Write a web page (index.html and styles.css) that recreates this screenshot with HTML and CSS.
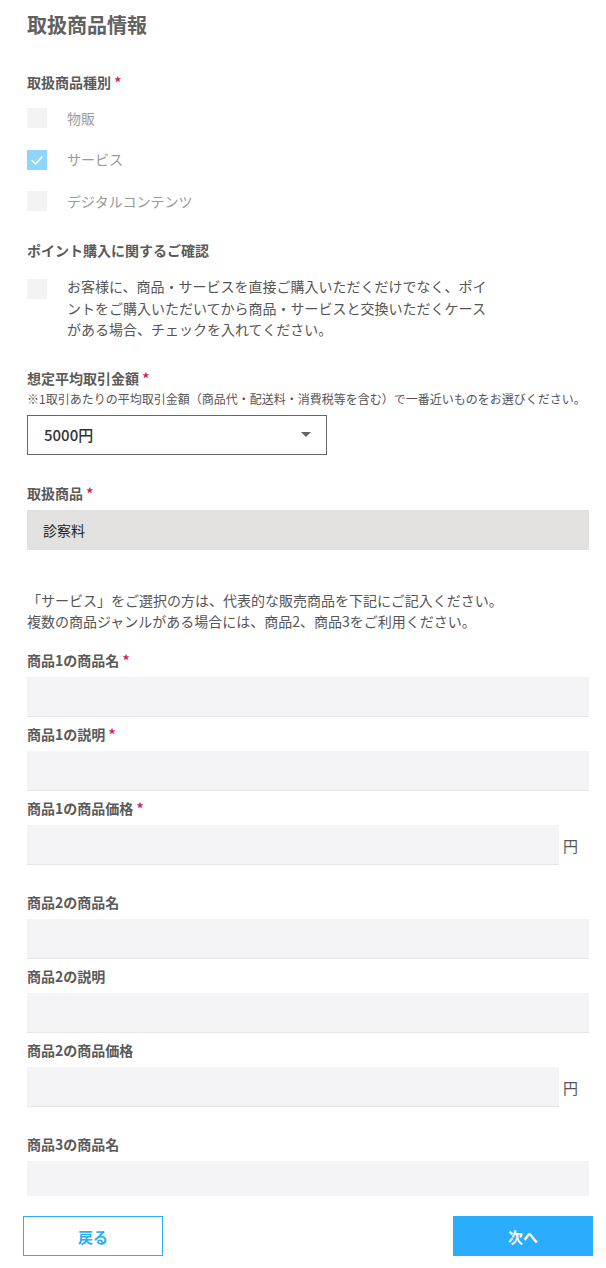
FILE: index.html
```html
<!DOCTYPE html>
<html lang="ja">
<head>
<meta charset="utf-8">
<title>取扱商品情報</title>
<link rel="stylesheet" href="styles.css">
</head>
<body>
<main class="page">
  <h1 class="title">取扱商品情報</h1>

  <div class="label first">取扱商品種別 <span class="req">*</span></div>
  <div class="options">
    <label class="option"><span class="box"></span><span class="opt-text">物販</span></label>
    <label class="option"><span class="box checked"><svg viewBox="0 0 20 20" width="20" height="20"><polyline points="5,10.5 8.5,14 15,7" fill="none" stroke="#fff" stroke-width="1.6" stroke-linecap="round" stroke-linejoin="round"/></svg></span><span class="opt-text">サービス</span></label>
    <label class="option"><span class="box"></span><span class="opt-text">デジタルコンテンツ</span></label>
  </div>

  <div class="label section">ポイント購入に関するご確認</div>
  <label class="confirm">
    <span class="box confirm-box"></span>
    <span class="confirm-text">お客様に、商品・サービスを直接ご購入いただくだけでなく、ポイントをご購入いただいてから商品・サービスと交換いただくケースがある場合、チェックを入れてください。</span>
  </label>

  <div class="label section">想定平均取引金額 <span class="req">*</span></div>
  <div class="note">※1取引あたりの平均取引金額（商品代・配送料・消費税等を含む）で一番近いものをお選びください。</div>
  <div class="select">
    <span class="select-value">5000円</span>
    <svg class="arrow" viewBox="0 0 10 5" width="10" height="5"><polygon points="0,0 10,0 5,5" fill="#666"/></svg>
  </div>

  <div class="label section">取扱商品 <span class="req">*</span></div>
  <div class="readonly">診察料</div>

  <p class="desc">「サービス」をご選択の方は、代表的な販売商品を下記にご記入ください。<br>複数の商品ジャンルがある場合には、商品2、商品3をご利用ください。</p>

  <div class="group">
    <div class="field"><div class="flabel">商品1の商品名 <span class="req">*</span></div><div class="input"></div></div>
    <div class="field"><div class="flabel">商品1の説明 <span class="req">*</span></div><div class="input"></div></div>
    <div class="field"><div class="flabel">商品1の商品価格 <span class="req">*</span></div><div class="price"><div class="input"></div><span class="yen">円</span></div></div>
  </div>
  <div class="group">
    <div class="field"><div class="flabel">商品2の商品名</div><div class="input"></div></div>
    <div class="field"><div class="flabel">商品2の説明</div><div class="input"></div></div>
    <div class="field"><div class="flabel">商品2の商品価格</div><div class="price"><div class="input"></div><span class="yen">円</span></div></div>
  </div>
  <div class="group">
    <div class="field"><div class="flabel">商品3の商品名</div><div class="input"></div></div>
  </div>
</main>

<footer class="footer">
  <button class="btn back">戻る</button>
  <button class="btn next">次へ</button>
</footer>
</body>
</html>
```

FILE: styles.css
```css
* { box-sizing: border-box; }
html, body { margin: 0; padding: 0; background: #fff; }
body {
  font-family: "Noto Sans CJK JP", "Noto Sans", sans-serif;
  color: #555;
  font-size: 14px;
}
.page {
  padding: 11px 17px 0 27px;
}
.title {
  margin: 0;
  font-size: 20px;
  line-height: 28px;
  font-weight: 700;
  color: #616161;
}
.label {
  font-size: 14px;
  line-height: 20px;
  font-weight: 700;
  color: #5a5a5a;
}
.label.first { margin-top: 33px; }
.label.section { margin-top: 28px; }
.req { color: #d81b60; font-weight: 700; }

.options {
  margin-top: 16px;
  display: flex;
  flex-direction: column;
  gap: 21.5px;
}
.option {
  display: flex;
  align-items: center;
  height: 20px;
}
.box {
  width: 20px;
  height: 20px;
  flex: none;
  background: #f3f3f3;
  display: block;
}
.box.checked { background: #8fd4fb; }
.box svg { display: block; }
.opt-text {
  margin-left: 20px;
  color: #9b9b9b;
  font-size: 14px;
  line-height: 20px;
  margin-top: -1px;
}

.options + .label.section { margin-top: 29px; }

.confirm {
  display: flex;
  align-items: flex-start;
  margin-top: 16px;
}
.confirm-box { margin-top: 3px; }
.confirm-text {
  margin-left: 20px;
  width: 425px;
  line-height: 21.5px;
  color: #555;
}
.confirm + .label.section { margin-top: 27px; }

.note {
  margin-top: 2px;
  font-size: 12px;
  line-height: 18px;
  color: #555;
  white-space: nowrap;
}
.select {
  margin-top: 7px;
  width: 300px;
  height: 40px;
  border: 1px solid #62676c;
  display: flex;
  align-items: center;
  justify-content: space-between;
  padding: 0 15px 0 16px;
}
.select-value {
  font-size: 15px;
  color: #333;
  font-weight: 500;
}
.arrow { display: block; }

.select + .label.section { margin-top: 28px; }
.readonly {
  margin-top: 7px;
  height: 40px;
  background: #e2e1df;
  padding: 0 16px;
  display: flex;
  align-items: center;
  color: #222;
  font-size: 14px;
}

.desc {
  margin: 40px 0 0;
  line-height: 21px;
  color: #555;
}

.group { margin-top: 18px; }
.group + .group { margin-top: 27px; }
.field { margin-top: 7px; }
.group .field:first-child { margin-top: 0; }
.flabel {
  font-size: 14px;
  line-height: 21px;
  font-weight: 700;
  color: #5a5a5a;
  margin-bottom: 6px;
}
.input {
  height: 40px;
  background: #f4f4f6;
  border-bottom: 1px solid #e6e6e8;
  flex: 1;
}
.price {
  display: flex;
  align-items: center;
}
.price .input { flex: 0 0 532px; }
.yen {
  margin-left: 4px;
  font-size: 15px;
  color: #555;
  padding-top: 2px;
}

.footer {
  position: fixed;
  left: 0;
  right: 0;
  bottom: 0;
  height: 72px;
  background: #fff;
  padding: 20px 13px 12px 23px;
  display: flex;
  justify-content: space-between;
  align-items: flex-start;
}
.btn {
  width: 140px;
  height: 40px;
  font-family: "Noto Sans CJK JP", "Noto Sans", sans-serif;
  font-size: 15px;
  font-weight: 700;
  border: 1px solid #29adfc;
  cursor: pointer;
  padding: 0;
}
.btn.back { background: #fff; color: #29adfc; }
.btn.next { background: #29adfc; color: #fff; }
```
